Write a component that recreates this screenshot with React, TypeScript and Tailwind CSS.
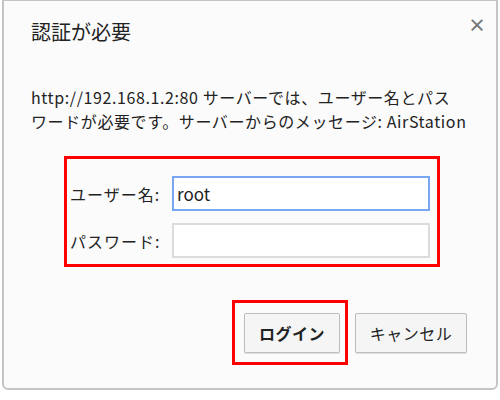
const font = { fontFamily: '"Noto Sans CJK JP", "Liberation Sans", sans-serif' };

const Field = ({ label, value, focused }: { label: string; value?: string; focused?: boolean }) => (
  <div className="flex items-center">
    <span className="w-[102px] text-[16px] tracking-[1px] text-[#222]">{label}</span>
    <div
      className={
        "h-[35px] w-[258px] bg-white px-[3px] flex items-center text-[17px] text-[#222] border-[2px] " +
        (focused ? "border-[#78a6f0]" : "border-[#dcdcdc]")
      }
    >
      {value}
    </div>
  </div>
);

const App = () => {
  return (
    <div className="w-[500px] h-[400px] bg-white" style={font}>
      <div className="ml-[2px] w-[496px] h-[390px] border-2 border-t border-[#c4c4c4] rounded-b-[6px] bg-[#fbfbfb] flex flex-col">
        <div className="flex justify-between items-start pl-[27px] pr-[10px] pt-[18px]">
          <h1 className="text-[20px] leading-[26px] text-[#222]">認証が必要</h1>
          <span className="text-[18px] leading-[18px] font-bold text-[#777] -mt-[4px]">×</span>
        </div>
        <p className="mt-[40px] pl-[27px] pr-[4px] text-[16px] tracking-[0.6px] leading-[24px] text-[#222] whitespace-nowrap">
          http://192.168.1.2:80 サーバーでは、ユーザー名とパス
          <br />
          ワードが必要です。サーバーからのメッセージ: AirStation
        </p>
        <div className="mt-[23px] ml-[60px] w-[376px] h-[111px] border-[3px] border-[#ff0000] flex flex-col gap-[12px] pl-[3px] pt-[17px]">
          <Field label="ユーザー名:" value="root" focused />
          <Field label="パスワード:" />
        </div>
        <div className="mt-[33px] flex justify-end items-center gap-[7px] pr-[29px]">
          <div className="w-[116px] h-[65px] border-[3px] border-[#ff0000] flex items-center pl-[9px]">
            <button className="w-[96px] h-[40px] border border-[#bdbdbd] rounded-[2px] bg-[#f5f5f5] shadow-[0_1px_1px_rgba(0,0,0,0.12)] text-[16px] tracking-[0.5px] font-bold text-[#222]">
              ログイン
            </button>
          </div>
          <button className="w-[112px] h-[40px] border border-[#bdbdbd] rounded-[2px] bg-[#f5f5f5] shadow-[0_1px_1px_rgba(0,0,0,0.12)] text-[16px] tracking-[0.5px] text-[#222]">
            キャンセル
          </button>
        </div>
      </div>
    </div>
  );
};

export default App;
